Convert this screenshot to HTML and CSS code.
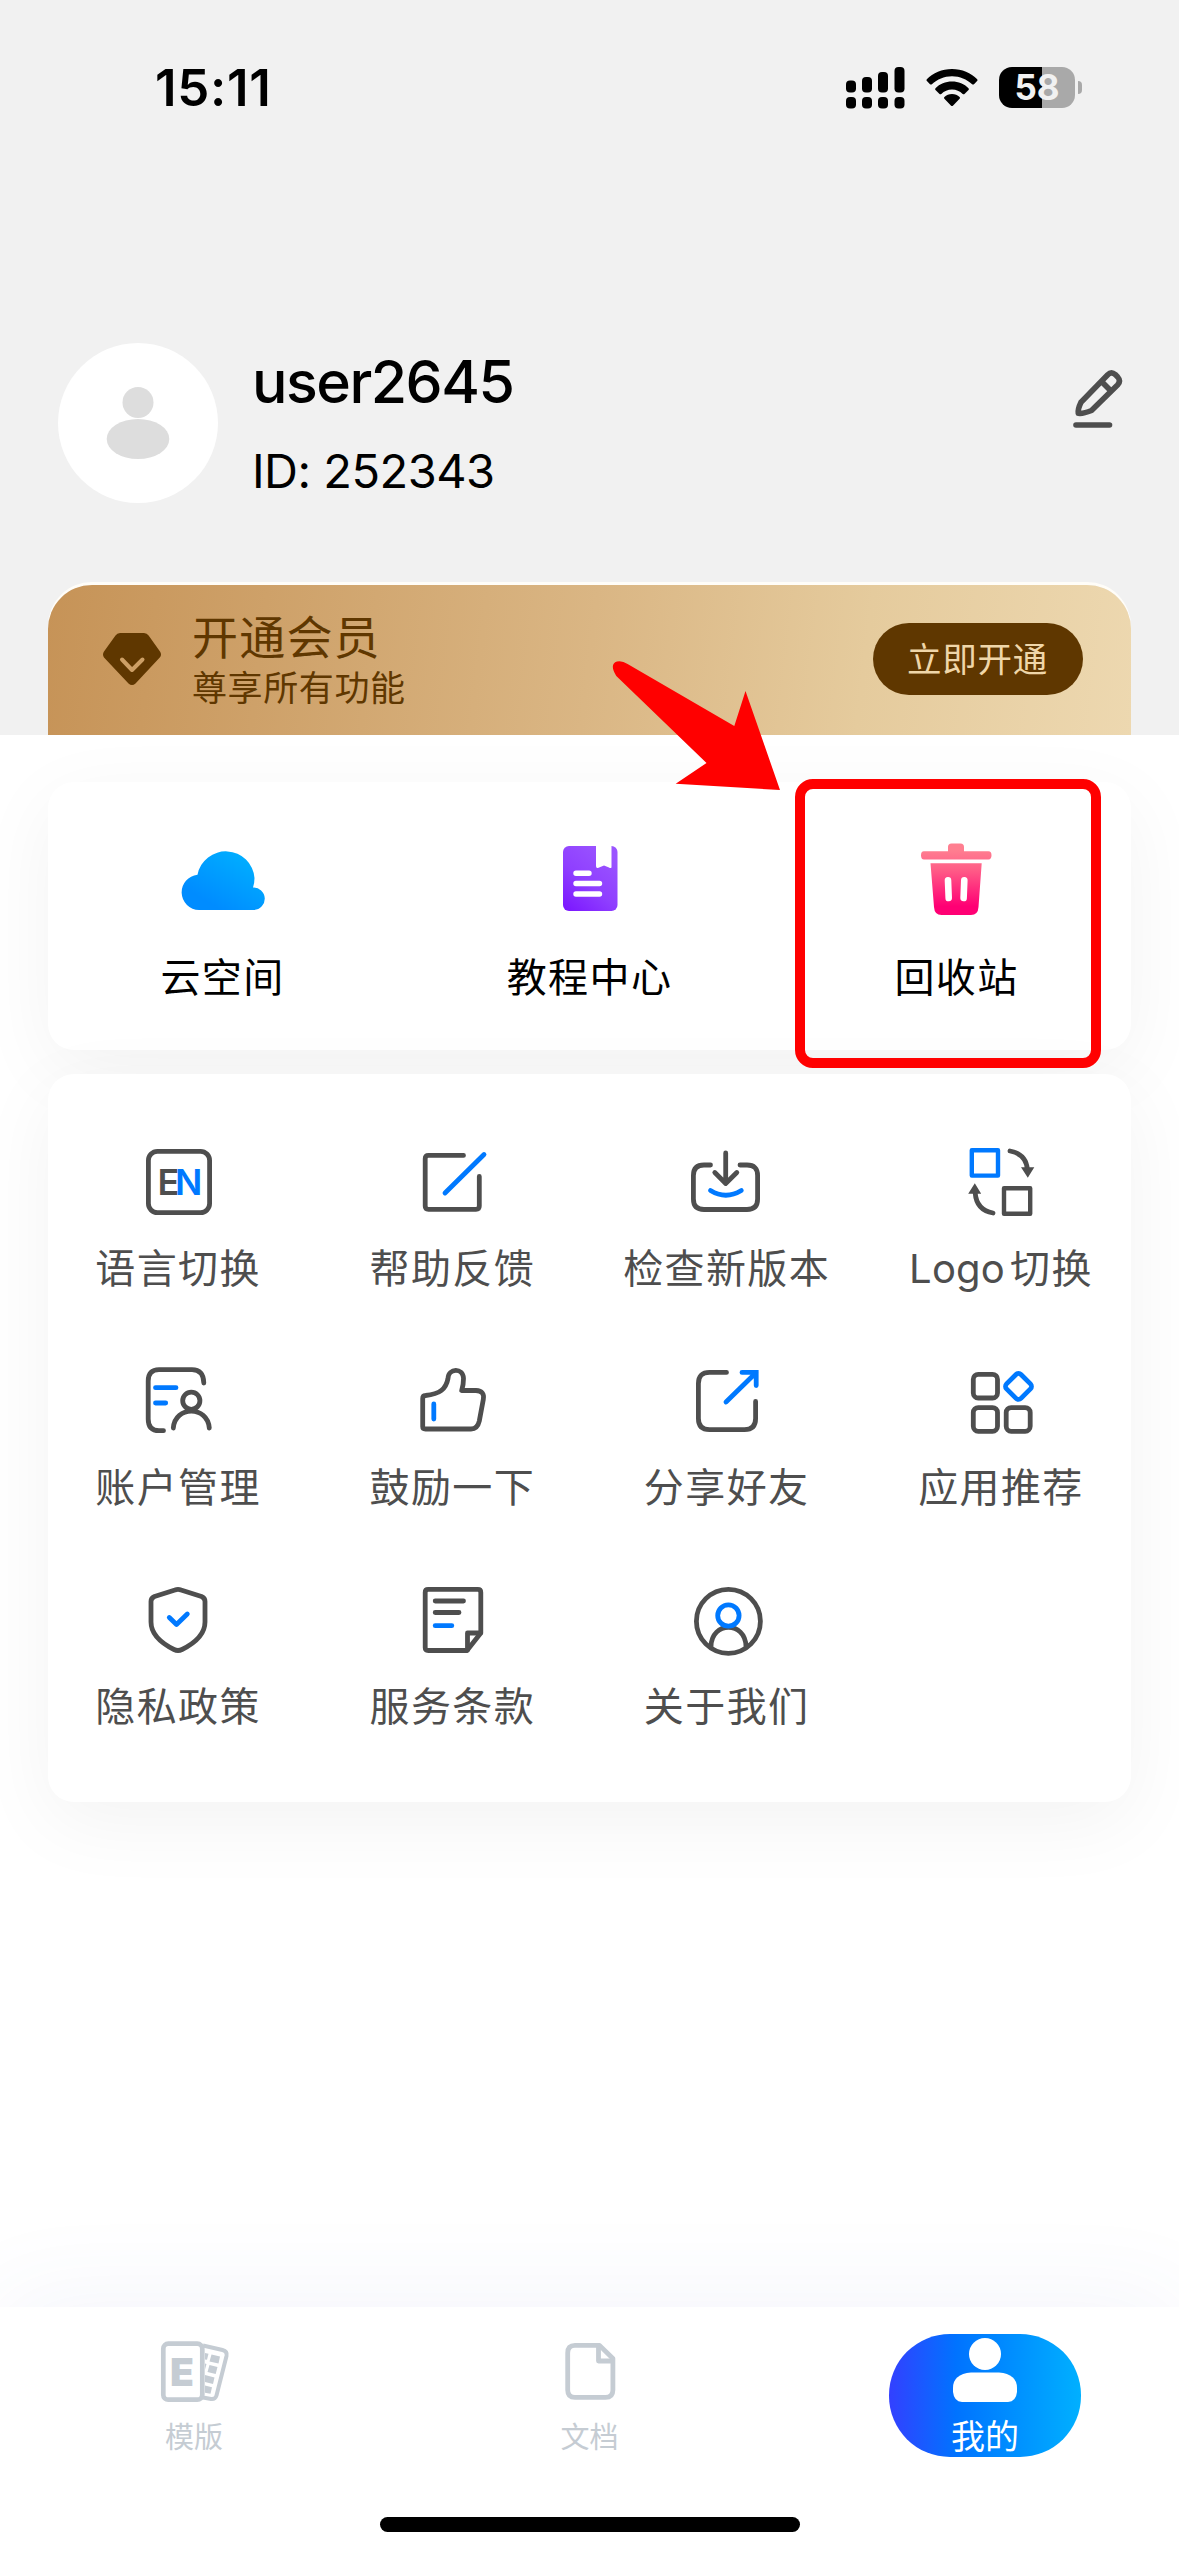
FILE: index.html
```html
<!DOCTYPE html>
<html lang="zh-CN">
<head>
<meta charset="utf-8">
<title>我的</title>
<link rel="stylesheet" href="styles.css">
</head>
<body>
<div class="page">
  <header class="hero">
    <div class="status">
      <span class="clock">15:11</span>
      <div class="status-icons">
        <svg class="signal" width="60" height="42" viewBox="0 0 60 42">
          <rect x="0" y="13.500" width="10" height="12" rx="4"/><rect x="16" y="10" width="10" height="15.500" rx="4"/>
          <rect x="32" y="5" width="10" height="20.500" rx="4"/><rect x="48.500" y="0" width="10" height="25.500" rx="4"/>
          <rect x="0" y="30" width="10" height="11.500" rx="4"/><rect x="16" y="30" width="10" height="11.500" rx="4"/>
          <rect x="32" y="30" width="10" height="11.500" rx="4"/><rect x="48.500" y="30" width="10" height="11.500" rx="4"/>
        </svg>
        <svg class="wifi" width="52" height="40" viewBox="0 0 52 40">
          <path d="M26 1C16 1 7 5 .8 11.200q-.8 1 .1 1.900L4 16.200q.9.800 1.900 0C11.300 11.200 18 8.200 26 8.200s14.700 3 20.100 8q1 .8 1.900 0l3.100-3.100q.9-.9.100-1.900C45 5 36 1 26 1z"/>
          <path d="M26 13.600c-6.500 0-12.300 2.500-16.500 6.600q-.9.900 0 1.800l4 3.900q.9.800 1.800 0c2.900-2.700 6.500-4.300 10.700-4.300s7.800 1.600 10.700 4.300q.9.800 1.800 0l4-3.900q.9-.9 0-1.800C38.300 16.100 32.500 13.600 26 13.600z"/>
          <path d="M26 26c-3 0-5.600 1.100-7.600 2.900q-.9.900 0 1.800l6.700 7q.9.800 1.800 0l6.700-7q.9-.9 0-1.800C31.600 27.100 29 26 26 26z"/>
        </svg>
        <div class="battery"><span class="level">58</span></div>
        <span class="nub"></span>
      </div>
    </div>

    <div class="profile">
      <svg class="avatar" width="160" height="160" viewBox="0 0 160 160">
        <circle cx="80" cy="80" r="80" fill="#fff"/>
        <circle cx="80" cy="59.500" r="15.500" fill="#ddd"/>
        <ellipse cx="80" cy="96" rx="31.300" ry="20" fill="#ddd"/>
      </svg>
      <div class="who">
        <span class="name">user2645</span>
        <span class="uid">ID: 252343</span>
      </div>
      <svg class="edit" width="60" height="66" viewBox="0 0 60 66" fill="none" stroke="#4e4e4e" stroke-width="5.600" stroke-linecap="round" stroke-linejoin="round">
        <path d="M8 59H41.500"/>
        <path d="M10.300 47.300Q9.500 43.500 13 36.200L39.500 9Q43.300 5 47.300 8.600L49.700 11Q53.300 15 49.500 19L23.500 44.500Q15 48 10.300 47.300z"/>
        <path d="M34.500 16.500l7.500 7.500" stroke-linecap="butt"/>
      </svg>
    </div>

    <section class="vip">
      <svg class="gem" width="58" height="52" viewBox="0 0 58 52">
        <path d="M17 0H41q3 0 4.600 2.500L57 18.500q2 3 0 5.700L32.500 50.500q-3.500 3-7 0L1 24.500q-2-3 0-6L12.500 2.500Q14 0 17 0z" fill="#5f3700"/>
        <path d="M19 26.500l10 10.500 10.500-10.500" fill="none" stroke="#cd9f65" stroke-width="4" stroke-linecap="round" stroke-linejoin="round"/>
      </svg>
      <div class="vip-text">
        <span class="vip-title">开通会员</span>
        <span class="vip-sub">尊享所有功能</span>
      </div>
      <span class="vip-btn">立即开通</span>
    </section>
  </header>

  <main class="content">
    <section class="card shortcuts">
      <div class="shortcut">
        <svg width="84" height="76" viewBox="0 0 84 76">
          <defs><linearGradient id="cloud" x1=".15" y1=".85" x2=".8" y2=".1"><stop offset=".1" stop-color="#008cff"/><stop offset="1" stop-color="#00aeff"/></linearGradient></defs>
          <path d="M18 68A17.700 17.700 0 0 1 16.500 32.700A28.800 28.800 0 0 1 73.500 36Q73.500 41 72 45.500A11.200 11.200 0 0 1 73 68z" fill="url(#cloud)"/>
        </svg>
        <span>云空间</span>
      </div>
      <div class="shortcut">
        <svg width="84" height="76" viewBox="0 0 84 76">
          <defs><linearGradient id="book" x1="0" y1="1" x2=".7" y2="0"><stop offset="0" stop-color="#7a14ff"/><stop offset=".5" stop-color="#8f3fff"/><stop offset="1" stop-color="#9a54ff"/></linearGradient></defs>
          <rect x="15" y="4" width="54.500" height="65" rx="6" fill="url(#book)"/>
          <path d="M48 3H63.500V25.500Q62.500 26.500 61 25.500L56 23.500 50.500 25.700Q48 26.500 48 24z" fill="#fff"/>
          <path d="M28 31.300H41M28 41.500H51.500M28 52H51.500" stroke="#fff" stroke-width="5.400" stroke-linecap="round"/>
        </svg>
        <span>教程中心</span>
      </div>
      <div class="shortcut">
        <svg width="84" height="76" viewBox="0 0 84 76">
          <defs><linearGradient id="bin" gradientUnits="userSpaceOnUse" x1="0" y1="1" x2="0" y2="73"><stop offset=".1" stop-color="#ff7e90"/><stop offset=".35" stop-color="#ff6088"/><stop offset=".88" stop-color="#ff0074"/></linearGradient></defs>
          <g transform="translate(-1 0)">
            <g fill="url(#bin)">
              <path d="M10 9.200H34V5q0-3.500 3.500-3.500H46.500Q50 1.500 50 5V9.200H74.500q3 0 3 4.100t-3 4.200H10q-3 0-3-4.200t3-4.100z"/>
              <path d="M16.500 21.300H67.700L64.500 65q-.5 8-7.500 8H27.500q-7 0-7.500-8z"/>
            </g>
            <path d="M34 38.300l.7 17.700M50.300 38.300l-.7 17.700" stroke="#fff" stroke-width="6.600" stroke-linecap="round"/>
          </g>
        </svg>
        <span>回收站</span>
      </div>
    </section>

    <section class="card tools">
      <div class="tool">
        <svg class="ico" viewBox="0 0 80 80">
          <rect x="10.400" y="9.400" width="61.200" height="61.200" rx="9"/>
          <text class="en" y="53.300"><tspan x="19.500">E</tspan><tspan class="en-n" x="37">N</tspan></text>
        </svg>
        <span>语言切换</span>
      </div>
      <div class="tool">
        <svg class="ico" viewBox="0 0 80 80">
          <path d="M51.500 13.400H16.500q-3.300 0-3.300 3.300V64q0 3.300 3.300 3.300H64q3.300 0 3.300-3.300V34.500"/>
          <path class="b" d="M33 51L72 12.500"/>
        </svg>
        <span>帮助反馈</span>
      </div>
      <div class="tool">
        <svg class="ico" viewBox="1 0 80 80">
          <path d="M24.500 23H18Q7.400 23 7.400 33.500V57Q7.400 67.500 18 67.500H61Q71.600 67.500 71.600 57V33.500Q71.600 23 61 23H54"/>
          <path d="M39.700 11V41.500M28.800 30.500L39.700 41.500 50.800 30.500"/>
          <path class="b" d="M24.500 48.500Q39.800 58 55.300 48.500"/>
        </svg>
        <span>检查新版本</span>
      </div>
      <div class="tool">
        <svg class="ico" viewBox="0 0 80 80">
          <rect class="b" x="10.800" y="8.200" width="26.200" height="25.400" stroke-width="4.400"/>
          <rect x="43" y="46.200" width="26.200" height="25.600" stroke-width="4.400"/>
          <path d="M49 9Q65 12 66.300 27M32 71Q15.500 68 14.200 51"/>
          <path class="solid" d="M60 25.300H73.300L66.800 35.700zM7.200 51.700H20.200L13.800 41.300z"/>
        </svg>
        <span><i class="latin">Logo</i>切换</span>
      </div>
      <div class="tool">
        <svg class="ico" viewBox="0 0 80 80">
          <path d="M65.800 22Q65.500 8.700 54 8.700H21Q10.200 8.700 10.200 20V58Q10.200 69.700 21 69.700H25.500"/>
          <circle cx="53.300" cy="39.700" r="8.600"/>
          <path d="M35.300 67C37 44.500 69.600 44.500 71.300 67"/>
          <path class="b" d="M17.500 26.700H38M17.500 42H27.700"/>
        </svg>
        <span>账户管理</span>
      </div>
      <div class="tool">
        <svg class="ico" viewBox="0 0 80 80">
          <path d="M10.700 37.500Q10.700 34.700 13.500 34.500C28 33 34 28 36 17.500C36.500 7 51 6.500 51.500 17.500Q51.500 24 49.700 29.500H64Q73 30 71.300 38.500L67.300 60Q65.500 68 59 68H13.500Q10.700 68 10.700 65.500z"/>
          <path class="b" d="M21.800 43V58"/>
        </svg>
        <span>鼓励一下</span>
      </div>
      <div class="tool">
        <svg class="ico" viewBox="1 0 80 80">
          <path d="M40.500 11.400H23.500Q12.400 11.400 12.400 22.500V57.500Q12.400 68.600 23.500 68.600H58.500Q69.600 68.600 69.600 57.500V40.500"/>
          <path class="b" d="M40 41L70.200 11.500M56 11.400H70.200V24.500" stroke-linejoin="miter"/>
        </svg>
        <span>分享好友</span>
      </div>
      <div class="tool">
        <svg class="ico" viewBox="0 0 80 80">
          <rect x="12.300" y="13.300" width="24.200" height="23.700" rx="5"/>
          <rect x="12.300" y="46.600" width="24.200" height="23.700" rx="5"/>
          <rect x="45.200" y="46.600" width="24" height="23.700" rx="5"/>
          <rect class="b" x="47.300" y="15.200" width="20.400" height="20.400" rx="3.500" transform="rotate(45 57.500 25.400)"/>
        </svg>
        <span>应用推荐</span>
      </div>
      <div class="tool">
        <svg class="ico" viewBox="0 0 80 80">
          <path d="M37 10Q40 8.700 43 10L63.500 16.500Q67 18 67 21.500V42C67 55 57 63 44 69.500Q40 71.500 36 69.500C23 63 13 55 13 42V21.500Q13 18 16.500 16.500z"/>
          <path class="b" d="M31.300 37.500L38.500 44.500 49.300 34"/>
        </svg>
        <span>隐私政策</span>
      </div>
      <div class="tool">
        <svg class="ico" viewBox="0 0 80 80">
          <path d="M55 70.500H16.200q-3 0-3-3V12.400q0-3 3-3H65.800q3 0 3 3V53z"/>
          <path d="M68.500 53H55.500V70"/>
          <path d="M23.200 21H51.500M23.200 32.500H47"/>
          <path class="b" d="M23.200 45.700H39.800"/>
        </svg>
        <span>服务条款</span>
      </div>
      <div class="tool">
        <svg class="ico" viewBox="1 0 80 80">
          <circle cx="42.400" cy="41.300" r="32"/>
          <path d="M25 66.500C25.500 41 59.500 41 60 66.500"/>
          <circle class="b" cx="42.400" cy="35.500" r="10.700" fill="#fff"/>
        </svg>
        <span>关于我们</span>
      </div>
    </section>
  </main>

  <footer class="bottom">
    <nav class="tabs">
      <div class="tab">
        <svg width="72" height="66" viewBox="0 0 72 66">
          <g fill="none" stroke="#c5ccd3" stroke-width="4">
            <path d="M45 6.500L64.500 11Q69.500 12.300 68.500 17L58.500 56.500Q57.200 60.500 53 60L45 58.500"/>
            <rect x="5.300" y="4.700" width="39" height="56" rx="5" stroke-width="4.700"/>
          </g>
          <g fill="#c5ccd3">
            <path d="M47 14l3.500.8-1.500 6-2-.3zM53.500 15.500l8.500 2-1.500 7-9-2zM47 24.500l1.500.5-1.500 5.500zM51.500 26l8 2-1.800 7-8.200-2zM47 36l9.500 2.500-1.500 6.500-8-2zM47 46.500l7 1.700-1.500 6.500-5.500-1z"/>
            <text class="tpl" x="12" y="47">E</text>
          </g>
        </svg>
        <span>模版</span>
      </div>
      <div class="tab">
        <svg width="72" height="66" viewBox="0 0 72 66" fill="none" stroke="#c5ccd3" stroke-width="4.800" stroke-linejoin="round">
          <path d="M45.500 6.400H21Q13.700 6.400 13.700 14V51Q13.700 58.400 21 58.400H51.500Q58.900 58.400 58.900 51V19.500z"/>
          <path d="M44.500 7V22H58.500"/>
        </svg>
        <span>文档</span>
      </div>
      <div class="tab">
        <div class="pill">
          <svg width="64" height="64" viewBox="0 0 64 64" fill="#fff">
            <circle cx="32" cy="16" r="16"/>
            <path d="M18 34.500H46Q64 36 64 50V54Q63 63.500 55 64H9Q1 63.500 0 54V50Q0 36 18 34.500z"/>
          </svg>
          <span>我的</span>
        </div>
      </div>
    </nav>
    <div class="home"></div>
  </footer>

  <div class="highlight"></div>
  <svg class="arrow" width="172" height="132" viewBox="0 0 172 132">
    <path d="M17.600 4L124.300 66 135.500 31 170 130 65.700 123.700 96.500 103 6.300 16Q-1 4 7 1.500 12 .3 17.600 4z" fill="#f00"/>
  </svg>
</div>
</body>
</html>
```
FILE: styles.css
```css
* { box-sizing: border-box; }
body { margin: 0; background: #fff; }
svg { display: block; flex: none; }
span { white-space: nowrap; }

.page {
  position: relative;
  display: flex;
  flex-direction: column;
  width: 1179px;
  height: 2556px;
  overflow: hidden;
  background: #fff;
  font-family: Inter, "Noto Sans CJK SC", sans-serif;
  color: #000;
}

/* header */
.hero {
  display: flex;
  flex-direction: column;
  height: 735px;
  padding: 0 48px;
  background: #f1f1f1;
}
.status {
  display: flex;
  justify-content: space-between;
  align-items: center;
  height: 175px;
  padding: 0 49px 0 107px;
}
.clock { font-size: 51px; font-weight: 600; letter-spacing: 0.7px; }
.status-icons { display: flex; align-items: center; }
.wifi { margin-left: 20px; }
.battery {
  display: flex;
  align-items: center;
  justify-content: center;
  width: 76px;
  height: 41px;
  margin-left: 21px;
  border-radius: 13px;
  background: linear-gradient(90deg, #000 57%, #a9a9a9 57%);
}
.level { font-size: 35px; font-weight: 700; line-height: 41px; color: #f1f1f1; }
.nub { width: 4px; height: 13px; margin-left: 3px; border-radius: 0 4px 4px 0; background: #a9a9a9; }

.profile {
  display: flex;
  align-items: flex-start;
  height: 407px;
  padding: 168px 2px 0 10px;
}
.who { display: flex; flex-direction: column; flex: 1; padding-left: 34px; }
.name { margin-top: 4px; font-size: 59px; font-weight: 500; line-height: 70px; letter-spacing: -1.5px; }
.uid { margin-top: 25px; font-size: 47px; line-height: 58px; letter-spacing: -0.5px; }
.edit { margin: 23px 1px 0 0; }

.vip {
  display: flex;
  align-items: center;
  height: 150px;
  margin-top: 3px;
  padding: 0 48px 2px 55px;
  border-radius: 44px 44px 0 0;
  background: linear-gradient(97deg, #c69357, #dab684 50%, #e5cb9d 75%, #edd8b0);
  box-shadow: 0 -3px 0 #fffdf8;
  color: #5f3700;
}
.vip-text { display: flex; flex-direction: column; flex: 1; padding: 2px 0 0 31px; }
.vip-title { font-size: 46px; letter-spacing: 1.2px; line-height: 56px; }
.vip-sub { font-size: 35px; letter-spacing: 0.6px; line-height: 46px; }
.vip-btn {
  width: 210px;
  height: 72px;
  border-radius: 36px;
  background: #5f3700;
  color: #efd6a9;
  font-size: 34.500px;
  letter-spacing: 0.8px;
  line-height: 73px;
  text-align: center;
  text-indent: -1px;
}

/* cards */
.content { display: flex; flex-direction: column; flex: 1; gap: 24px; padding: 47px 48px 0; }
.card {
  display: grid;
  justify-content: center;
  border-radius: 26px;
  background: #fff;
  box-shadow: 0 20px 80px rgba(0, 0, 0, 0.05);
}
.shortcuts { grid-template-columns: repeat(3, 367px); height: 268px; padding-top: 60px; }
.shortcut { display: flex; flex-direction: column; align-items: center; font-size: 40px; letter-spacing: 1.4px; }
.shortcut span { margin-top: 31px; line-height: 58px; }

.tools { grid-template-columns: repeat(4, 274.300px); grid-auto-rows: 219px; align-content: start; height: 728px; padding-top: 68px; }
.tool { display: flex; flex-direction: column; align-items: center; color: #4e4e4e; font-size: 40px; letter-spacing: 1.400px; }
.tool > span { margin-top: 18px; line-height: 58px; }
.latin { margin-right: 5px; font-style: normal; letter-spacing: 0.2px; }
.ico { width: 80px; height: 80px; fill: none; stroke: #4e4e4e; stroke-width: 4.800; stroke-linecap: round; stroke-linejoin: round; }
.ico .b { stroke: #0079ff; }
.ico .solid { fill: #4e4e4e; stroke: none; }
.ico .en { fill: #4e4e4e; stroke: none; font-size: 36px; font-weight: 600; letter-spacing: -1px; }
.ico .en .en-n { fill: #0079ff; }

/* bottom tabs */
.bottom {
  height: 249px;
  background: #fff;
  box-shadow: 0 -10px 100px rgba(60, 90, 190, 0.06);
}
.tabs { display: grid; grid-template-columns: repeat(3, 395.500px); justify-content: center; height: 210px; }
.tab { display: flex; flex-direction: column; align-items: center; padding-top: 32px; color: #c5ccd3; font-size: 29px; }
.tab > span { margin-top: 12px; line-height: 42px; }
.tpl { font-size: 39px; font-weight: 900; }
.pill {
  display: flex;
  flex-direction: column;
  align-items: center;
  width: 192px;
  height: 123px;
  margin-top: -5px;
  padding-top: 4px;
  border-radius: 61px;
  background: linear-gradient(90deg, #3340ff, #0073ff 35%, #00b0ff);
  color: #fff;
  font-size: 34px;
}
.pill span { margin-top: 11px; line-height: 48px; }
.home { width: 420px; height: 15px; margin: 0 auto; border-radius: 8px; background: #000; }

/* annotation over the recycle bin */
.highlight {
  position: absolute;
  left: 795px;
  top: 779px;
  width: 306px;
  height: 289px;
  border: 10px solid #f00;
  border-radius: 18px;
}
.arrow { position: absolute; left: 610px; top: 660px; }
```
